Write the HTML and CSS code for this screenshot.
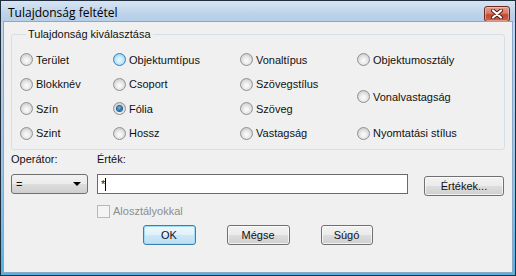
FILE: index.html
```html
<!DOCTYPE html>
<html>
<head>
    <meta charset="utf-8">
    <title>Tulajdonság feltétel</title>
    <link rel="stylesheet" href="styles.css">
</head>
<body>
    <div class="window">
        <div class="titlebar">
            <span class="title">Tulajdonság feltétel</span>
            <div class="close">
                <svg width="14" height="10" viewBox="0 0 14 10">
                    <path d="M3 1.5 L11 8.5 M11 1.5 L3 8.5" stroke="#4a1d16" stroke-width="4" stroke-linecap="round"/>
                    <path d="M3 1.5 L11 8.5 M11 1.5 L3 8.5" stroke="#ffffff" stroke-width="2.2" stroke-linecap="round"/>
                </svg>
            </div>
        </div>
        <div class="client">
            <fieldset class="group">
                <legend>Tulajdonság kiválasztása</legend>
                <div class="radios">
                    <label class="radio"><span class="dot"></span>Terület</label>
                    <label class="radio"><span class="dot hot"></span>Objektumtípus</label>
                    <label class="radio"><span class="dot"></span>Vonaltípus</label>
                    <label class="radio"><span class="dot"></span>Objektumosztály</label>

                    <label class="radio"><span class="dot"></span>Blokknév</label>
                    <label class="radio"><span class="dot"></span>Csoport</label>
                    <label class="radio"><span class="dot"></span>Szövegstílus</label>
                    <label class="radio tall"><span class="dot"></span>Vonalvastagság</label>

                    <label class="radio"><span class="dot"></span>Szín</label>
                    <label class="radio"><span class="dot checked"></span>Fólia</label>
                    <label class="radio"><span class="dot"></span>Szöveg</label>

                    <label class="radio"><span class="dot"></span>Szint</label>
                    <label class="radio"><span class="dot"></span>Hossz</label>
                    <label class="radio"><span class="dot"></span>Vastagság</label>
                    <label class="radio"><span class="dot"></span>Nyomtatási stílus</label>
                </div>
            </fieldset>

            <div class="filter">
                <span class="lbl">Operátor:</span>
                <span class="lbl">Érték:</span>
                <span></span>

                <div class="combo">=<span class="arrow"></span></div>
                <div class="field">*<span class="caret"></span></div>
                <div class="btn values">Értékek...</div>

                <span></span>
                <label class="check"><span class="box"></span>Alosztályokkal</label>
                <span></span>
            </div>

            <div class="actions">
                <div class="btn default ok">OK</div>
                <div class="btn cancel">Mégse</div>
                <div class="btn help">Súgó</div>
            </div>
        </div>
    </div>
</body>
</html>
```

FILE: styles.css
```css
html, body {
  margin: 0;
  padding: 0;
  background: #ffffff;
}

.window {
  width: 516px;
  height: 276px;
  box-sizing: border-box;
  border: 1px solid #1f2d3d;
  background: linear-gradient(#c7daee, #b3cce8 30%, #8cc3ea 70%, #4db4e4);
  display: flex;
  flex-direction: column;
  font-family: "Liberation Sans", Arial, sans-serif;
  font-size: 11px;
  color: #111;
}

/* title bar */
.titlebar {
  height: 21px;
  display: flex;
  align-items: center;
  justify-content: space-between;
  padding: 0 5px 0 7px;
  background: linear-gradient(#d6e4f3, #bdd3ea 60%, #b5cde8);
}
.title {
  font-family: "Open Sans", "Liberation Sans", sans-serif;
  font-size: 12px;
  line-height: 21px;
  color: #000;
  padding-top: 1px;
}
.close {
  width: 26px;
  height: 16px;
  margin-top: 4px;
  box-sizing: border-box;
  border: 1px solid #6e2a20;
  border-radius: 3px;
  background: linear-gradient(#e3a292, #d57a66 45%, #c24a33 55%, #c9624a);
  box-shadow: inset 0 0 0 1px rgba(255, 220, 210, 0.45);
  display: flex;
  align-items: center;
  justify-content: center;
}

/* client area */
.client {
  flex: 1;
  margin: 0 3px 3px 3px;
  background: #f0f0f0;
  padding: 6px 7px 0 7px;
  box-shadow: 0 0 0 1px #8aa9c8;
}

.group {
  margin: 0;
  padding: 6px 0 4px 8px;
  border: 1px solid #d5dfe5;
  border-radius: 3px;
}
.group legend {
  margin-left: 6px;
  padding: 0 2px;
  line-height: 13px;
}

.radios {
  display: grid;
  grid-template-columns: 93px 127px 117px auto;
  grid-template-rows: 25px 24px 25px 24px;
}
.radio {
  display: flex;
  align-items: center;
  gap: 3px;
  white-space: nowrap;
}
.radio.tall {
  grid-column: 4;
  grid-row: span 2;
}

.dot {
  width: 13px;
  height: 13px;
  box-sizing: border-box;
  border-radius: 50%;
  border: 1px solid #8f9193;
  background: radial-gradient(circle at 50% 60%, #fcfcfc 0, #f0f0f0 30%, #cfd0d1 75%, #e4e4e4 100%);
  display: flex;
  align-items: center;
  justify-content: center;
}
.dot.hot {
  border-color: #3d7fb2;
  background: radial-gradient(circle at 50% 55%, #eaf8fe 0, #c9ecfb 40%, #8ed0f3 80%, #c9ebfa 100%);
}
.dot.checked::after {
  content: "";
  width: 5px;
  height: 5px;
  border-radius: 50%;
  background: radial-gradient(circle at 45% 40%, #7cc8f0 0, #1e6fb0 55%, #0d3d6e 100%);
  box-shadow: 0 0 0 1px #2a5f8f;
}

/* operator / value row */
.filter {
  margin-top: 3px;
  display: grid;
  grid-template-columns: 86px 327px 80px;
}
.lbl {
  line-height: 13px;
}
.combo {
  margin-top: 8px;
  width: 77px;
  height: 20px;
  box-sizing: border-box;
  border: 1px solid #707070;
  border-radius: 3px;
  background: linear-gradient(#f2f2f2, #ebebeb 50%, #dddddd 51%, #cfcfcf);
  padding-left: 4px;
  line-height: 18px;
  display: flex;
  justify-content: space-between;
  align-items: center;
}
.arrow {
  width: 0;
  height: 0;
  margin-right: 6px;
  border-left: 4px solid transparent;
  border-right: 4px solid transparent;
  border-top: 4px solid #000;
}
.field {
  margin-top: 8px;
  width: 311px;
  height: 20px;
  box-sizing: border-box;
  border: 1px solid #6a6a6a;
  background: #fff;
  padding-left: 3px;
  display: flex;
  align-items: center;
  line-height: 14px;
}
.caret {
  width: 1px;
  height: 13px;
  background: #000;
}

.btn {
  height: 20px;
  box-sizing: border-box;
  border: 1px solid #707070;
  border-radius: 3px;
  background: linear-gradient(#f2f2f2, #ebebeb 50%, #dddddd 51%, #cfcfcf);
  box-shadow: inset 0 0 0 1px rgba(255, 255, 255, 0.7);
  display: flex;
  align-items: center;
  justify-content: center;
  line-height: 14px;
}
.btn.values {
  margin-top: 10px;
  width: 80px;
}
.btn.default {
  border-color: #3c7fb1;
  box-shadow: inset 0 0 0 1px #9fdcf7;
  background: linear-gradient(#eef7fc, #e1f1fa 50%, #cde8f7 51%, #bcdff2);
}

.check {
  margin-top: 9px;
  display: flex;
  align-items: center;
  gap: 3px;
  color: #8d8d8d;
  line-height: 13px;
}
.box {
  width: 13px;
  height: 13px;
  box-sizing: border-box;
  border: 1px solid #b9b9b9;
  background: #f4f4f4;
}

/* dialog buttons */
.actions {
  margin-top: 7px;
  display: flex;
  justify-content: center;
  gap: 31px;
  padding-right: 1px;
}
.btn.ok { width: 53px; }
.btn.cancel { width: 63px; }
.btn.help { width: 52px; }
```
